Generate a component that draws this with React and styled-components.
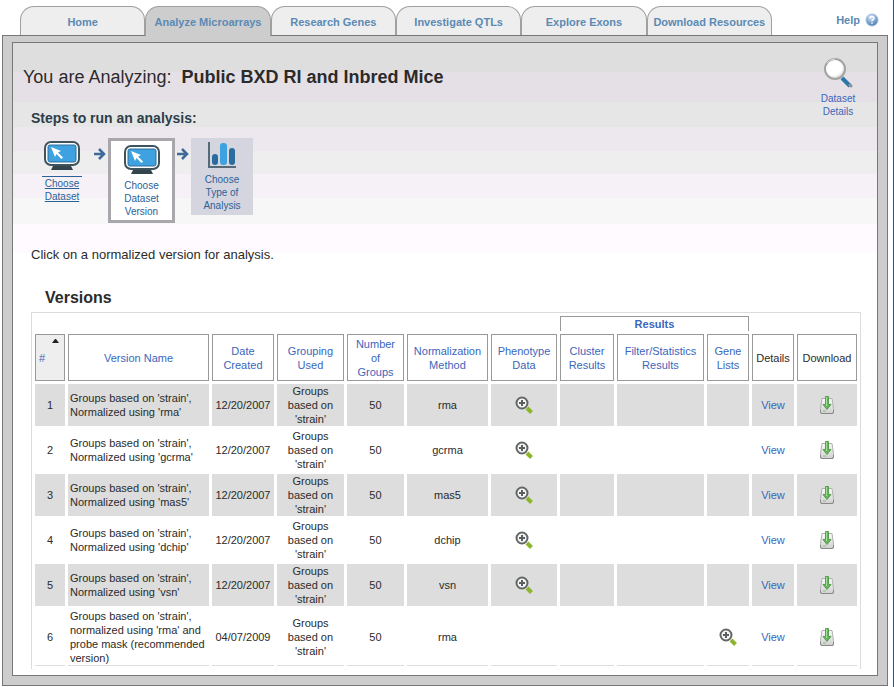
import React from "react";
import styled, { createGlobalStyle, css } from "styled-components";

const GlobalStyle = createGlobalStyle`
  *, *::before, *::after { box-sizing: border-box; }
  body {
    margin: 0;
    background: #fff;
    color: #2b2b2b;
    font: 11px/14px "Liberation Sans", Arial, sans-serif;
  }
  a { color: #3a66bb; text-decoration: none; }
`;

const Page = styled.div`
  border-right: 1px solid #34506e;
  padding: 6px 5px 1px 2px;
`;

const TopBar = styled.header`
  display: flex;
  justify-content: space-between;
  padding: 0 9px 0 18px;
`;

const Tabs = styled.nav`
  display: flex;
  flex: 0 1 752px;
`;

const Tab = styled.a`
  position: relative;
  flex: 1 1 0;
  height: ${(p) => (p.$active ? 30 : 29)}px;
  margin-bottom: ${(p) => (p.$active ? -1 : 0)}px;
  padding-top: 2px;
  border: 1px solid #a0a0a0;
  border-bottom: 0;
  border-radius: 14px 14px 0 0;
  background: ${(p) => (p.$active ? "#cdcdcd" : "#eeeeee")};
  color: #5b8ab5;
  font-weight: bold;
  line-height: 26px;
  text-align: center;
  white-space: nowrap;
`;

const HelpLink = styled.a`
  display: flex;
  align-items: center;
  gap: 5px;
  height: 26px;
  padding-top: 2px;
  color: #5b8ab5;
  font-weight: bold;
`;

const Frame = styled.div`
  padding: 6px 9px 9px;
  border: 1px solid #777;
  background: #cdcdcd;
`;

const Content = styled.main`
  padding-bottom: 9px;
  border: 1px solid #777;
  background: #fff linear-gradient(
    #dedede 29px,
    #e5e0e5 29px 59px,
    #e6e6e6 59px 84px,
    #ece8ed 84px 108px,
    #eeeeee 108px 131px,
    #f5f1f7 131px 155px,
    #f7f7f7 155px 181px,
    #fefaff 181px 210px,
    #ffffff 210px
  );
`;

const Intro = styled.div`
  display: flex;
  justify-content: space-between;
  align-items: flex-start;
  padding: 14px 19px 0 10px;
`;

const Title = styled.h1`
  display: flex;
  gap: 10px;
  margin: 8px 0 20px;
  font-size: 18px;
  font-weight: normal;
  line-height: 24px;
`;

const StepsTitle = styled.h2`
  margin: 0 0 11px 8px;
  color: #2c3e4a;
  font-size: 14px;
  line-height: 18px;
`;

const StepList = styled.ol`
  display: flex;
  align-items: flex-start;
  margin: 0 0 0 19px;
  padding: 0;
  list-style: none;
`;

const stepKinds = {
  done: css`
    width: 40px;
    padding-top: 3px;
    text-decoration: underline;
    span { border-top: 1px solid #2a6298; }
    svg { margin-bottom: 5px; }
  `,
  current: css`
    width: 67px;
    height: 85px;
    padding: 4px 10px 0;
    border: 3px solid #a9a7ab;
    background: #fff;
    svg { margin-bottom: 4px; }
  `,
  next: css`
    width: 62px;
    height: 77px;
    padding: 3px 10px 0;
    background: #d4d5df;
    svg { margin-bottom: 4px; }
  `,
};

const Step = styled.a`
  display: flex;
  flex-direction: column;
  align-items: center;
  color: #2a6298;
  font-size: 10px;
  line-height: 13px;
  text-align: center;
  ${(p) => stepKinds[p.$kind]}
`;

const StepArrow = styled.li`
  padding: 10px 2px 0 ${(p) => (p.$wide ? 12 : 2)}px;
  line-height: 0;
`;

const DatasetLink = styled.a`
  display: flex;
  flex-direction: column;
  align-items: center;
  width: 40px;
  gap: 3px;
  font-size: 10px;
  line-height: 13px;
  text-align: center;
`;

const Hint = styled.p`
  margin: 23px 18px 24px;
  font-size: 13px;
  line-height: 18px;
`;

const SectionTitle = styled.h2`
  margin: 0 32px 4px;
  font-size: 16px;
  line-height: 20px;
`;

const TableFrame = styled.div`
  margin: 0 16px 0 18px;
  border: 1px solid #dcdcdc;
  border-bottom: 0;
`;

const Table = styled.table`
  width: 100%;
  margin-bottom: -3px;
  border-spacing: 3px;
  table-layout: fixed;
`;

const Col = styled.col`
  width: ${(p) => (p.$width ? `${p.$width}px` : "auto")};
`;

const GroupHead = styled.th`
  height: 15px;
  padding: 0;
  border: 1px solid #999;
  border-bottom: 0;
  color: #3a66bb;
  line-height: 14px;
`;

const Head = styled.th`
  position: relative;
  height: 47px;
  padding: 0 ${(p) => (p.$sorted ? 3 : 0)}px;
  border: 1px solid #999;
  background: ${(p) => (p.$sorted ? "#eeeeee" : "#fff")};
  font-weight: normal;
  text-align: ${(p) => (p.$sorted ? "left" : "center")};
`;

const SortButton = styled.button`
  padding: 0;
  border: 0;
  background: none;
  color: #3a66bb;
  font: inherit;
  text-align: inherit;
  white-space: pre-line;
`;

const SortMark = styled.svg`
  position: absolute;
  top: 4px;
  right: 5px;
`;

const Row = styled.tr`
  background: ${(p) => (p.$shaded ? "#dcdddc" : "transparent")};
  &:last-child td { border-bottom: 1px solid #dcdcdc; }
`;

const Cell = styled.td`
  height: 42px;
  padding: 0 ${(p) => (p.$left ? 2 : 0)}px;
  text-align: ${(p) => (p.$left ? "left" : "center")};
  white-space: ${(p) => (p.$lines ? "pre-line" : "normal")};
  svg { display: block; margin: 0 auto; }
`;

const IconLink = styled.a`
  display: block;
`;

function MonitorIcon() {
  return (
    <svg width="36" height="30" viewBox="0 0 36 30" aria-hidden="true">
      <path d="M10 23h16l3 6H7z" fill="#34444c" />
      <rect x="1" y="1" width="34" height="23" rx="6" fill="#fff" stroke="#3e535c" strokeWidth="2" />
      <rect x="4" y="4" width="28" height="17" rx="2" fill="#3fa2e0" stroke="#2f719d" />
      <path d="M7 6l10 4-3 1.500 5 5-1.500 1.500-5-5L11 16z" fill="#fff" />
    </svg>
  );
}

function ChartIcon() {
  return (
    <svg width="31" height="28" viewBox="0 0 31 28" aria-hidden="true">
      <path d="M2 1v25h27" fill="none" stroke="#546a77" strokeWidth="2" />
      <rect x="5" y="13" width="6" height="11" rx="3" fill="#2b6c9f" />
      <rect x="13" y="2" width="7" height="22" rx="3" fill="#3fa2e0" />
      <rect x="22" y="7" width="6" height="17" rx="3" fill="#2b6c9f" />
    </svg>
  );
}

function ArrowIcon() {
  return (
    <svg width="12" height="12" viewBox="0 0 12 12" aria-hidden="true">
      <path d="M0 6h9M5 1l5 5-5 5" fill="none" stroke="#3f6a9c" strokeWidth="2.500" />
    </svg>
  );
}

function MagnifierIcon() {
  return (
    <svg width="30" height="32" viewBox="0 0 30 32" aria-hidden="true">
      <defs>
        <radialGradient id="lens" cx=".4" cy=".35" r=".7">
          <stop offset=".65" stopColor="#fff" />
          <stop offset="1" stopColor="#c9c9c9" />
        </radialGradient>
      </defs>
      <path d="M19 21l8 8" stroke="#2c75ab" strokeWidth="4" />
      <path d="M27 28l1 1" stroke="#8b939b" strokeWidth="3" strokeLinecap="round" />
      <circle cx="12" cy="12" r="10" fill="url(#lens)" stroke="#a3a3a3" strokeWidth="2" />
      <path d="M4 6a10 10 0 0 1 8-4" fill="none" stroke="#ddd" />
    </svg>
  );
}

function HelpIcon() {
  return (
    <svg width="14" height="14" viewBox="0 0 14 14" aria-hidden="true">
      <defs>
        <radialGradient id="ball" cx=".4" cy=".25" r=".8">
          <stop offset="0" stopColor="#d4e4f4" />
          <stop offset="1" stopColor="#4378b4" />
        </radialGradient>
      </defs>
      <circle cx="7" cy="7" r="6" fill="url(#ball)" stroke="#9fbcdc" />
      <path d="M5 5.500c0-3 4-2.500 4-.3 0 1.500-2 1.500-2 3M7 9.500v1.300" fill="none" stroke="#fff" strokeWidth="1.500" />
    </svg>
  );
}

function ZoomIcon() {
  return (
    <svg width="18" height="18" viewBox="0 0 18 18" aria-hidden="true">
      <path d="M12 12l4.500 4.500" stroke="#8ab52c" strokeWidth="4" />
      <circle cx="7" cy="7" r="5.500" fill="#f5f5f5" stroke="#636667" strokeWidth="2" />
      <path d="M4 7h6M7 4v6" stroke="#5c5f60" strokeWidth="2" />
    </svg>
  );
}

function DownloadIcon() {
  return (
    <svg width="14" height="18" viewBox="0 0 14 18" aria-hidden="true">
      <defs>
        <linearGradient id="drive" x1="0" y1="0" x2="0" y2="1">
          <stop offset="0" stopColor="#fafafa" />
          <stop offset="1" stopColor="#d0d0d0" />
        </linearGradient>
      </defs>
      <path d="M2 2.500h10l1.500 10V16q0 1.500-1.500 1.500H2Q.5 17.500.5 16v-3.500z" fill="url(#drive)" stroke="#b0b0b0" />
      <path d="M.5 14v2q0 1.500 1.500 1.500h10q1.500 0 1.500-1.500v-2" fill="none" stroke="#888" />
      <path d="M3 15h3" stroke="#85c27b" />
      <path d="M5.500.5h3v8H11l-4 5-4-5h2.500z" fill="#66b45b" stroke="#55a04d" />
      <path d="M6.500 1v9" stroke="#a5dc9b" />
    </svg>
  );
}

const tabs = [
  "Home",
  "Analyze Microarrays",
  "Research Genes",
  "Investigate QTLs",
  "Explore Exons",
  "Download Resources",
];

const columns = [
  { label: "#", width: 30, sorted: true },
  { label: "Version Name" },
  { label: "Date\nCreated", width: 62 },
  { label: "Grouping\nUsed", width: 67 },
  { label: "Number\nof\nGroups", width: 57 },
  { label: "Normalization\nMethod", width: 81 },
  { label: "Phenotype\nData", width: 66 },
  { label: "Cluster\nResults", width: 54 },
  { label: "Filter/Statistics\nResults", width: 87 },
  { label: "Gene\nLists", width: 42 },
  { label: "Details", width: 42, plain: true },
  { label: "Download", width: 60, plain: true },
];

const versions = [
  { name: "Groups based on 'strain', Normalized using 'rma'", date: "12/20/2007", method: "rma", phenotype: true },
  { name: "Groups based on 'strain', Normalized using 'gcrma'", date: "12/20/2007", method: "gcrma", phenotype: true },
  { name: "Groups based on 'strain', Normalized using 'mas5'", date: "12/20/2007", method: "mas5", phenotype: true },
  { name: "Groups based on 'strain', Normalized using 'dchip'", date: "12/20/2007", method: "dchip", phenotype: true },
  { name: "Groups based on 'strain', Normalized using 'vsn'", date: "12/20/2007", method: "vsn", phenotype: true },
  {
    name: "Groups based on 'strain', normalized using 'rma' and probe mask (recommended version)",
    date: "04/07/2009",
    method: "rma",
    genes: true,
  },
];

function VersionsTable() {
  return (
    <TableFrame>
      <Table aria-labelledby="versions-title">
        <colgroup>
          {columns.map((c) => (
            <Col key={c.label} $width={c.width} />
          ))}
        </colgroup>
        <thead>
          <tr>
            <td colSpan={7} />
            <GroupHead colSpan={3} scope="colgroup">Results</GroupHead>
            <td colSpan={2} />
          </tr>
          <tr>
            {columns.map((c) => (
              <Head key={c.label} scope="col" $sorted={c.sorted}>
                {c.plain ? c.label : <SortButton type="button">{c.label}</SortButton>}
                {c.sorted && (
                  <SortMark width="7" height="4" viewBox="0 0 7 4" aria-hidden="true">
                    <path d="M0 4l3-4h1l3 4z" fill="#222" />
                  </SortMark>
                )}
              </Head>
            ))}
          </tr>
        </thead>
        <tbody>
          {versions.map((v, i) => (
            <Row key={v.name} $shaded={i % 2 === 0}>
              <Cell>{i + 1}</Cell>
              <Cell $left>{v.name}</Cell>
              <Cell>{v.date}</Cell>
              <Cell $lines>{"Groups\nbased on\n'strain'"}</Cell>
              <Cell>50</Cell>
              <Cell>{v.method}</Cell>
              <Cell>
                {v.phenotype && <IconLink href="#phenotype" aria-label="Phenotype data"><ZoomIcon /></IconLink>}
              </Cell>
              <Cell />
              <Cell />
              <Cell>
                {v.genes && <IconLink href="#genes" aria-label="Gene lists"><ZoomIcon /></IconLink>}
              </Cell>
              <Cell><a href="#view">View</a></Cell>
              <Cell>
                <IconLink href="#download" aria-label="Download"><DownloadIcon /></IconLink>
              </Cell>
            </Row>
          ))}
        </tbody>
      </Table>
    </TableFrame>
  );
}

export default function App() {
  return (
    <>
      <GlobalStyle />
      <Page>
        <TopBar>
          <Tabs>
            {tabs.map((t) => (
              <Tab key={t} href="#tab" $active={t === "Analyze Microarrays"}>{t}</Tab>
            ))}
          </Tabs>
          <HelpLink href="#help">
            Help <HelpIcon />
          </HelpLink>
        </TopBar>
        <Frame>
          <Content>
            <Intro>
              <div>
                <Title>
                  <span>You are Analyzing:</span>
                  <b>Public BXD RI and Inbred Mice</b>
                </Title>
                <StepsTitle>Steps to run an analysis:</StepsTitle>
                <StepList>
                  <li>
                    <Step href="#dataset" $kind="done">
                      <MonitorIcon />
                      <span>Choose Dataset</span>
                    </Step>
                  </li>
                  <StepArrow $wide><ArrowIcon /></StepArrow>
                  <li>
                    <Step href="#version" $kind="current" aria-current="step">
                      <MonitorIcon />
                      <span>Choose Dataset Version</span>
                    </Step>
                  </li>
                  <StepArrow><ArrowIcon /></StepArrow>
                  <li>
                    <Step href="#type" $kind="next">
                      <ChartIcon />
                      <span>Choose Type of Analysis</span>
                    </Step>
                  </li>
                </StepList>
              </div>
              <DatasetLink href="#details">
                <MagnifierIcon />
                <span>Dataset Details</span>
              </DatasetLink>
            </Intro>
            <Hint>Click on a normalized version for analysis.</Hint>
            <SectionTitle id="versions-title">Versions</SectionTitle>
            <VersionsTable />
          </Content>
        </Frame>
      </Page>
    </>
  );
}
